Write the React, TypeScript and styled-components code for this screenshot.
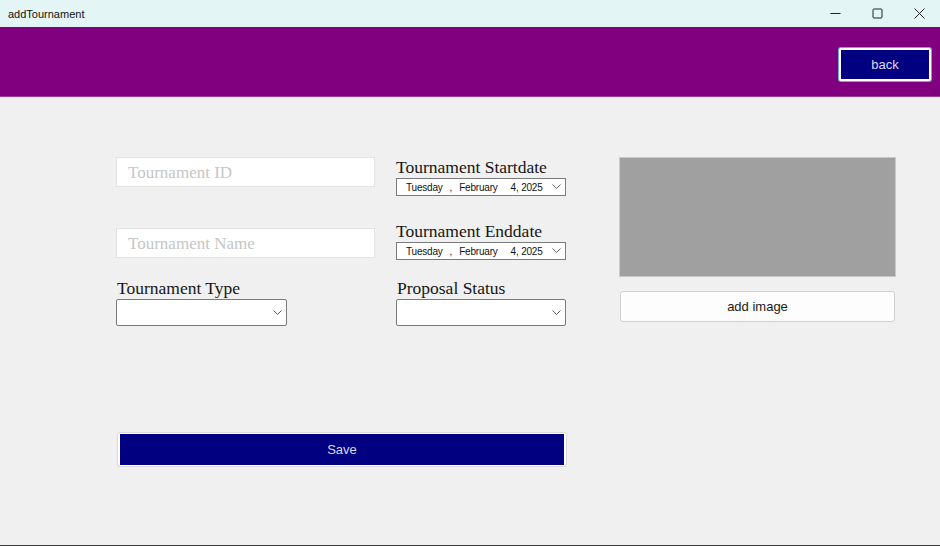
import React from "react";
import styled, { createGlobalStyle } from "styled-components";

const Global = createGlobalStyle`
  html, body { margin: 0; padding: 0; background: #f0f0f0; }
  * { box-sizing: border-box; }
`;

const Window = styled.div`
  width: 940px;
  height: 546px;
  display: flex;
  flex-direction: column;
  background: #f0f0f0;
  border-bottom: 1px solid #3a3a3a;
  overflow: hidden;
`;

const TitleBar = styled.div`
  height: 27px;
  flex: 0 0 27px;
  display: flex;
  align-items: center;
  background: #e4f5f5;
  padding-left: 8px;
`;

const TitleText = styled.span`
  font-family: "Liberation Sans", Arial, sans-serif;
  font-size: 11px;
  color: #111;
  flex: 1;
`;

const Controls = styled.div`
  display: flex;
  height: 100%;
`;

const ControlBtn = styled.div`
  width: 42px;
  height: 100%;
  display: flex;
  align-items: center;
  justify-content: center;
`;

const Header = styled.div`
  height: 70px;
  flex: 0 0 70px;
  background: #800080;
  border-bottom: 1px solid #9a3a9a;
  display: flex;
  justify-content: flex-end;
  align-items: flex-start;
  padding: 20px 9px 0 0;
`;

const NavyButton = styled.button<{ $w: number; $h: number }>`
  width: ${(p) => p.$w}px;
  height: ${(p) => p.$h}px;
  background: #000080;
  color: #dcdcf2;
  font-family: "Liberation Sans", Arial, sans-serif;
  font-size: 13px;
  border: 2px solid #ffffff;
  border-radius: 2px;
  padding: 0;
  cursor: pointer;
`;

const BackButton = styled(NavyButton)`
  box-shadow: 0 0 0 1px #6fa6e6;
  margin-top: 1px;
`;

const Body = styled.div`
  flex: 1;
  display: flex;
  padding: 60px 0 0 116px;
  gap: 53px;
`;

const FormArea = styled.div`
  width: 450px;
  display: flex;
  flex-direction: column;
`;

const FieldsGrid = styled.div`
  display: grid;
  grid-template-columns: 259px 170px;
  grid-template-rows: 64px 57px auto;
  column-gap: 21px;
`;

const Cell = styled.div<{ $pt?: number }>`
  display: flex;
  flex-direction: column;
  align-items: flex-start;
  padding-top: ${(p) => p.$pt ?? 0}px;
`;

const TextBox = styled.div`
  width: 259px;
  height: 30px;
  background: #ffffff;
  border: 1px solid #e2e2e2;
  display: flex;
  align-items: center;
  padding-left: 11px;
  padding-top: 1px;
  font-family: "Liberation Serif", "Times New Roman", serif;
  font-size: 17px;
  color: #c6c6c6;
`;

const Label = styled.div<{ $pl?: number }>`
  font-family: "Liberation Serif", "Times New Roman", serif;
  font-size: 17.5px;
  line-height: 20px;
  height: 20px;
  margin-bottom: 1px;
  color: #161616;
  padding-left: ${(p) => p.$pl ?? 0}px;
`;

const DatePicker = styled.div`
  width: 170px;
  height: 18px;
  background: #ffffff;
  border: 1px solid #7a7a7a;
  display: flex;
  align-items: center;
  font-family: "Liberation Sans", Arial, sans-serif;
  font-size: 10px;
  letter-spacing: -0.2px;
  color: #111;
  padding-left: 9px;
  position: relative;
`;

const DatePart = styled.span<{ $ml: number }>`
  margin-left: ${(p) => p.$ml}px;
  white-space: pre;
`;

const Chevron = styled.span<{ $right: number }>`
  position: absolute;
  right: ${(p) => p.$right}px;
  top: 50%;
  transform: translateY(-50%);
  display: flex;
`;

const Combo = styled.div<{ $w: number }>`
  width: ${(p) => p.$w}px;
  height: 27px;
  background: #ffffff;
  border: 1px solid #7a7a7a;
  border-radius: 2px;
  position: relative;
`;

const SaveButton = styled(NavyButton)`
  margin: 107px 0 0 2px;
  border-width: 1px 2px;
  box-shadow: 0 0 0 1px #dadada;
`;

const ImageColumn = styled.div`
  width: 277px;
  display: flex;
  flex-direction: column;
  align-items: flex-start;
`;

const ImageBox = styled.div`
  width: 277px;
  height: 120px;
  background: #a0a0a0;
  border: 1px solid #c9c9c9;
`;

const AddImageButton = styled.button`
  margin: 14px 0 0 1px;
  width: 275px;
  height: 31px;
  background: #fdfdfd;
  border: 1px solid #d0d0d0;
  border-radius: 3px;
  font-family: "Liberation Sans", Arial, sans-serif;
  font-size: 13px;
  color: #1a1a1a;
  padding: 0;
`;

const ChevronIcon = () => (
  <svg width="9" height="6" viewBox="0 0 9 6">
    <polyline points="0.5,0.5 4.5,4.5 8.5,0.5" fill="none" stroke="#606060" strokeWidth="1" />
  </svg>
);

const DateField = () => (
  <DatePicker>
    <DatePart $ml={0}>Tuesday</DatePart>
    <DatePart $ml={7}>,</DatePart>
    <DatePart $ml={7}>February</DatePart>
    <DatePart $ml={13}>4, 2025</DatePart>
    <Chevron $right={4}>
      <ChevronIcon />
    </Chevron>
  </DatePicker>
);

export default function App() {
  return (
    <Window>
      <Global />
      <TitleBar>
        <TitleText>addTournament</TitleText>
        <Controls>
          <ControlBtn>
            <svg width="11" height="11" viewBox="0 0 11 11">
              <line x1="0.5" y1="5.5" x2="10.5" y2="5.5" stroke="#222" strokeWidth="1" />
            </svg>
          </ControlBtn>
          <ControlBtn>
            <svg width="11" height="11" viewBox="0 0 11 11">
              <rect x="1" y="1" width="9" height="9" rx="1" fill="none" stroke="#222" strokeWidth="1" />
            </svg>
          </ControlBtn>
          <ControlBtn>
            <svg width="11" height="11" viewBox="0 0 11 11">
              <line x1="0.5" y1="0.5" x2="10.5" y2="10.5" stroke="#222" strokeWidth="1" />
              <line x1="10.5" y1="0.5" x2="0.5" y2="10.5" stroke="#222" strokeWidth="1" />
            </svg>
          </ControlBtn>
        </Controls>
      </TitleBar>
      <Header>
        <BackButton $w={92} $h={33}>back</BackButton>
      </Header>
      <Body>
        <FormArea>
          <FieldsGrid>
            <Cell>
              <TextBox>Tournament ID</TextBox>
            </Cell>
            <Cell>
              <Label>Tournament Startdate</Label>
              <DateField />
            </Cell>
            <Cell $pt={7}>
              <TextBox>Tournament Name</TextBox>
            </Cell>
            <Cell>
              <Label>Tournament Enddate</Label>
              <DateField />
            </Cell>
            <Cell>
              <Label $pl={1}>Tournament Type</Label>
              <Combo $w={171}>
                <Chevron $right={4}>
                  <ChevronIcon />
                </Chevron>
              </Combo>
            </Cell>
            <Cell>
              <Label $pl={1}>Proposal Status</Label>
              <Combo $w={170}>
                <Chevron $right={4}>
                  <ChevronIcon />
                </Chevron>
              </Combo>
            </Cell>
          </FieldsGrid>
          <SaveButton $w={448} $h={33}>Save</SaveButton>
        </FormArea>
        <ImageColumn>
          <ImageBox />
          <AddImageButton>add image</AddImageButton>
        </ImageColumn>
      </Body>
    </Window>
  );
}
